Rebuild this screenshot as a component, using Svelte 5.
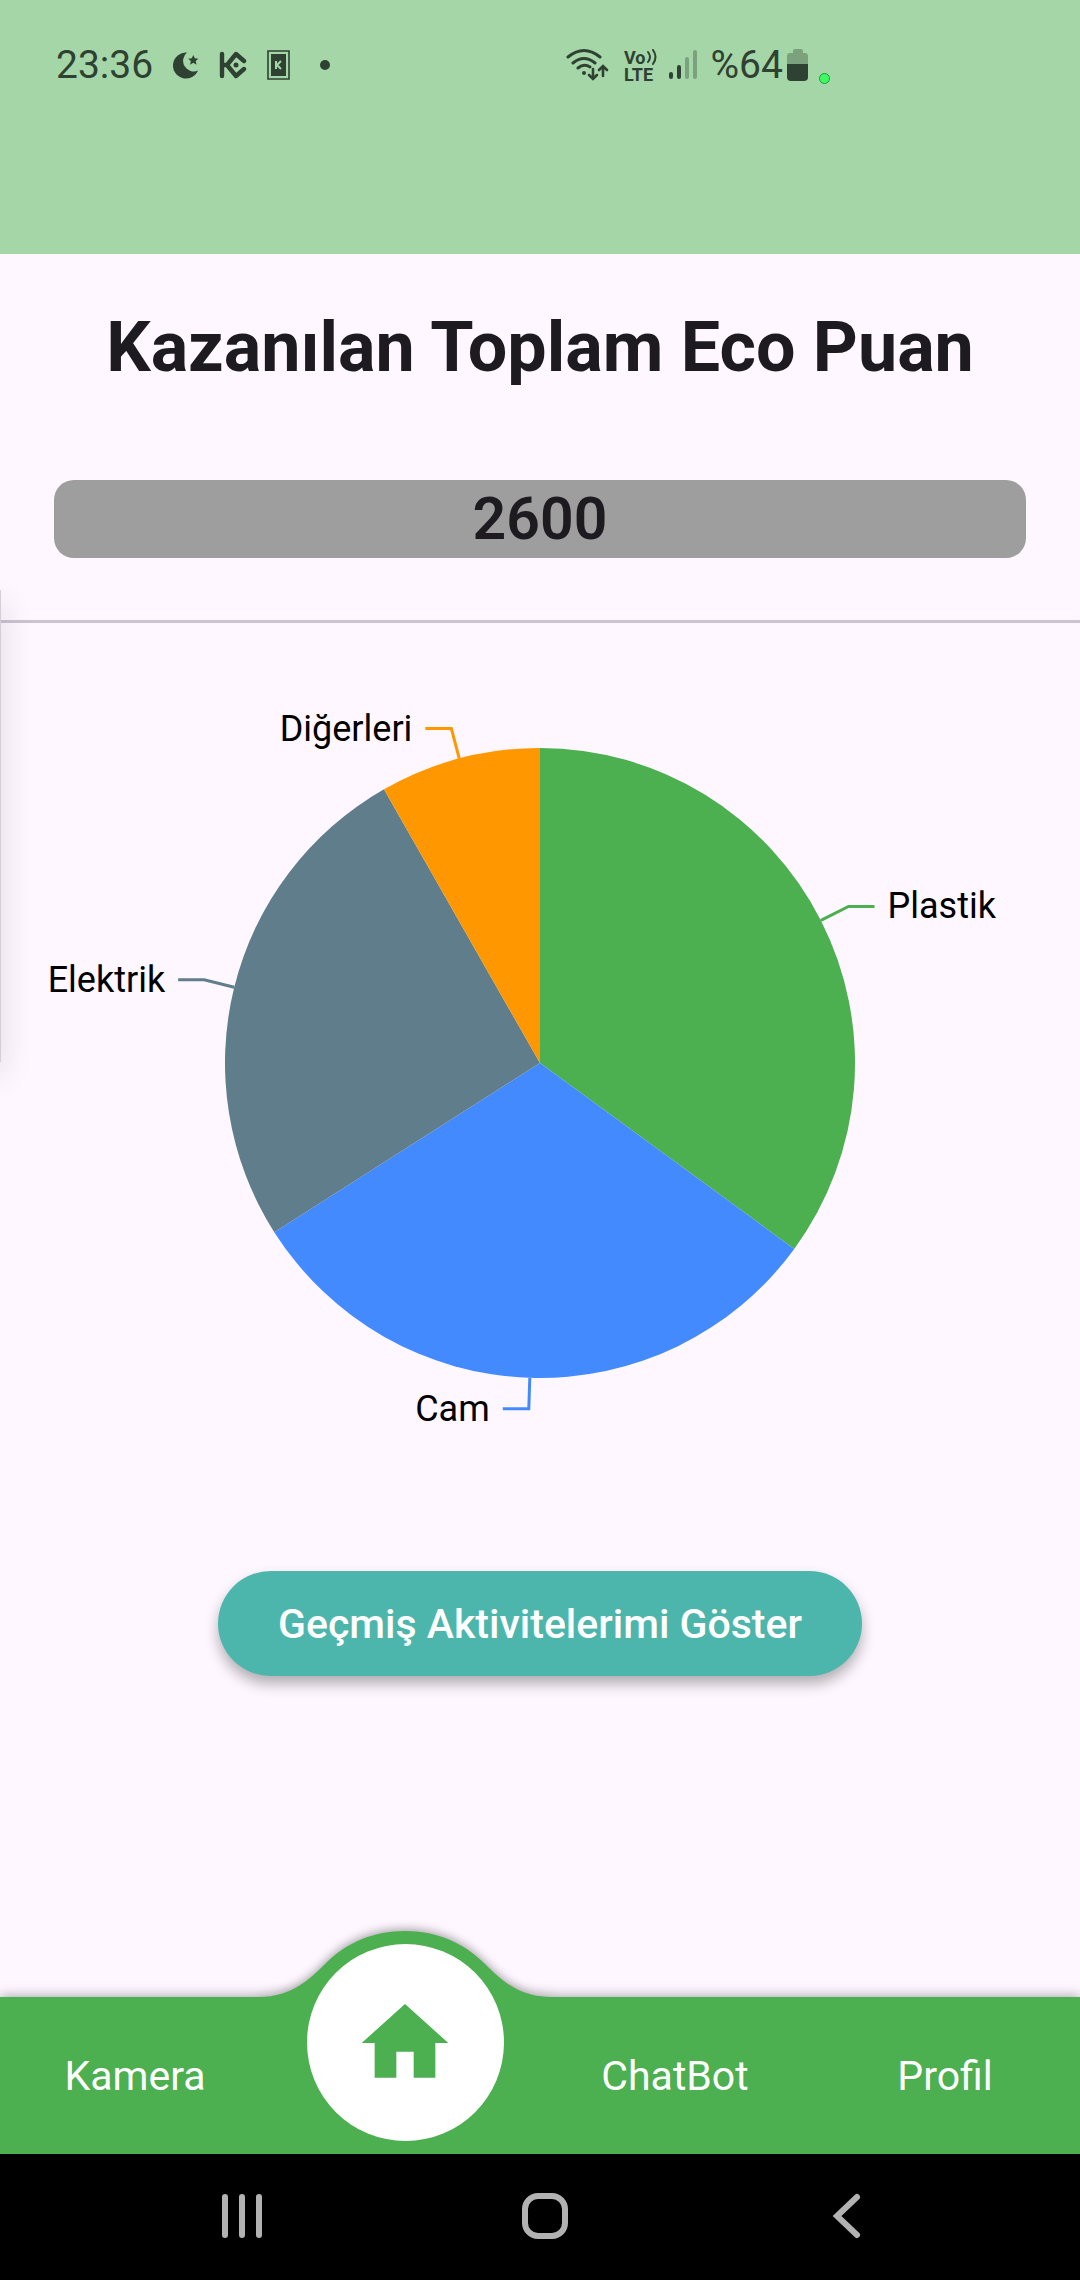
<script>
  const radius = 315;
  const cx = 540;
  const cy = 383;
  const data = [
    { name: 'Plastik', value: 34, color: '#4caf50' },
    { name: 'Cam', value: 30, color: '#448aff' },
    { name: 'Elektrik', value: 25, color: '#607d8b' },
    { name: 'Diğerleri', value: 8, color: '#ff9800' }
  ];
  const total = data.reduce((sum, d) => sum + d.value, 0);
  const at = (turn, r) => [
    cx + r * Math.sin(turn * 2 * Math.PI),
    cy - r * Math.cos(turn * 2 * Math.PI)
  ];

  let used = 0;
  const slices = data.map((d) => {
    const start = used / total;
    used += d.value;
    const end = used / total;
    const mid = (start + end) / 2;
    const side = mid < 0.5 ? 1 : -1;
    const a = at(start, radius);
    const b = at(end, radius);
    const edge = at(mid, radius);
    const elbow = at(mid, radius + 31);
    const large = end - start > 0.5 ? 1 : 0;
    return {
      ...d,
      wedge: `M${cx} ${cy}L${a}A${radius} ${radius} 0 ${large} 1 ${b}Z`,
      line: `M${edge}L${elbow}h${side * 26}`,
      x: elbow[0] + side * 39,
      y: elbow[1] + 12,
      anchor: side > 0 ? 'start' : 'end'
    };
  });
</script>

<div class="screen">
  <header>
    <div class="status left">
      <span class="clock">23:36</span>
      <svg width="26" height="27" viewBox="0 0 26 27" fill="#2f4132" aria-hidden="true">
        <path d="M14 .6A13 13 0 1 0 25 18.500A10.600 10.600 0 0 1 14 .6Z" />
        <path d="M20.300 3l1.500 3.300 3.600.4-2.700 2.400.8 3.600-3.200-1.900-3.200 1.900.8-3.600-2.700-2.400 3.600-.4z" />
      </svg>
      <svg width="28" height="30" viewBox="0 0 28 30" fill="none" stroke="#2f4132" stroke-width="4.400" stroke-linecap="round" stroke-linejoin="round" aria-hidden="true">
        <path d="M3 4v22M4 15h4L17 4l8 7M8 15l9 11 8-7" />
        <circle cx="17" cy="15" r="2.500" fill="#2f4132" stroke="none" />
      </svg>
      <svg width="23" height="30" viewBox="0 0 23 30" aria-hidden="true">
        <path d="M1 1h21v28H1z" fill="none" stroke="#2f4132" stroke-width="1.600" />
        <path d="M4 4h15v22H4z" fill="#2f4132" />
        <path d="M9 11v8M14 11l-4 4 4 4" fill="none" stroke="#a5d6a7" stroke-width="2" />
      </svg>
      <span class="dot"></span>
    </div>
    <div class="status right">
      <svg width="44" height="34" viewBox="0 0 44 34" fill="none" stroke="#2f4132" stroke-width="3" stroke-linecap="round" aria-hidden="true">
        <path d="M2 9Q18-4 34 9M7 15Q18 6 29 15M12 20Q18 15 24 19" />
        <circle cx="18" cy="25" r="2" fill="#2f4132" stroke="none" />
        <path d="M27 21v9M23 27l4 4 4-4M37 28V19M33 22l4-4 4 4" stroke-width="2.600" />
      </svg>
      <span class="volte">
        <span class="vo">Vo<svg width="10" height="16" viewBox="0 0 10 16" fill="none" stroke="#2f4132" stroke-width="2" stroke-linecap="round" aria-hidden="true">
            <path d="M1 3q4 5 0 10M6 1q5 7 0 14" />
          </svg></span>
        <span>LTE</span>
      </span>
      <svg class="signal" width="28" height="30" viewBox="0 0 28 30" stroke="#2f4132" stroke-width="4" stroke-linecap="round" aria-hidden="true">
        <path d="M2 24v3M10 17v10" />
        <path d="M18 9v18M26 2v25" opacity=".35" />
      </svg>
      <span class="percent">%64</span>
      <svg class="battery" width="22" height="34" viewBox="0 0 22 34" fill="#2f4132" aria-hidden="true">
        <path d="M0 16V8a3 3 0 0 1 3-3h3V3a2 2 0 0 1 2-2h6a2 2 0 0 1 2 2v2h2a3 3 0 0 1 3 3v8z" opacity=".35" />
        <path d="M0 16h21v13a4 4 0 0 1-4 4H4a4 4 0 0 1-4-4z" />
      </svg>
      <span class="led"></span>
    </div>
  </header>

  <main>
    <h1>Kazanılan Toplam Eco Puan</h1>
    <div class="points">2600</div>
    <hr />
    <svg class="chart" viewBox="0 0 1080 775" role="img" aria-label="Eco Puan">
      {#each slices as s (s.name)}
        <path d={s.wedge} fill={s.color} />
        <path d={s.line} fill="none" stroke={s.color} stroke-width="3" />
        <text x={s.x} y={s.y} text-anchor={s.anchor}>{s.name}</text>
      {/each}
    </svg>
    <button class="history" type="button">Geçmiş Aktivitelerimi Göster</button>
    <div class="drawer-edge"></div>
  </main>

  <nav class="tabs">
    <a href="#kamera">Kamera</a>
    <a class="home" href="#home" aria-label="Home">
      <svg class="bump" width="292" height="67" viewBox="0 0 292 67" aria-hidden="true">
        <path d="M0 67V66C32 66 50 49 66 33C88 11 115 0 146 0S204 11 226 33C242 49 260 66 292 66V67Z" fill="#4caf50" />
      </svg>
      <span class="disc">
        <svg width="104" height="104" viewBox="0 0 24 24" fill="#4caf50" aria-hidden="true">
          <path d="M10 20v-6h4v6h5v-8h3L12 3 2 12h3v8z" />
        </svg>
      </span>
    </a>
    <a href="#chatbot">ChatBot</a>
    <a href="#profil">Profil</a>
  </nav>

  <div class="system">
    <button type="button" aria-label="Recents">
      <svg width="48" height="48" viewBox="0 0 48 48" aria-hidden="true">
        <path d="M6 5v38M23 5v38M40 5v38" />
      </svg>
    </button>
    <button type="button" aria-label="Home screen">
      <svg width="48" height="48" viewBox="0 0 48 48" aria-hidden="true">
        <rect x="4" y="4" width="40" height="40" rx="13" />
      </svg>
    </button>
    <button type="button" aria-label="Back">
      <svg width="48" height="48" viewBox="0 0 48 48" aria-hidden="true">
        <path d="M34 5L14 24l20 19" />
      </svg>
    </button>
  </div>
</div>

<style>
  :global(body) {
    margin: 0;
    background: #fef7ff;
  }
  .screen {
    min-height: 100vh;
    display: flex;
    flex-direction: column;
    overflow: hidden;
    font-family: Roboto, 'Liberation Sans', sans-serif;
    color: #1d1b20;
    background: #fef7ff;
  }
  header {
    height: 254px;
    box-sizing: border-box;
    padding: 40px 56px 0;
    display: grid;
    grid-template-columns: 510px 1fr;
    align-items: start;
    background: #a5d6a7;
    color: #2f4132;
  }
  .status {
    height: 50px;
    display: flex;
    align-items: center;
  }
  .clock,
  .percent {
    font-size: 39px;
    line-height: 50px;
  }
  .left {
    gap: 20px;
  }
  .dot {
    width: 10px;
    height: 10px;
    margin-left: 10px;
    border-radius: 50%;
    background: #2f4132;
  }
  .volte {
    display: flex;
    flex-direction: column;
    margin-left: 14px;
    padding-top: 2px;
    font-size: 18px;
    line-height: 17px;
    font-weight: 700;
  }
  .vo {
    display: flex;
    gap: 1px;
  }
  .signal {
    margin: 0 14px 0 12px;
  }
  .battery {
    margin-left: 4px;
  }
  .led {
    width: 9px;
    height: 9px;
    margin: 26px 0 0 10px;
    border: 1px solid #1f9a3c;
    border-radius: 50%;
    background: #3dfc62;
  }
  main {
    position: relative;
    flex: 1;
    display: flex;
    flex-direction: column;
  }
  h1 {
    margin: 53px 0 0;
    font-size: 70px;
    line-height: 80px;
    font-weight: 700;
    text-align: center;
  }
  .points {
    margin: 93px 54px 0;
    border-radius: 20px;
    background: #9e9e9e;
    font-size: 59px;
    line-height: 78px;
    font-weight: 600;
    text-align: center;
  }
  hr {
    width: 100%;
    height: 3px;
    margin: 62px 0 0;
    border: 0;
    background: #cac4d0;
  }
  .chart {
    display: block;
    width: 100%;
    margin-top: 57px;
  }
  .chart text {
    font-size: 36px;
    fill: #000;
  }
  .history {
    align-self: center;
    height: 105px;
    margin-top: 116px;
    padding: 0 60px;
    border: 0;
    border-radius: 53px;
    background: #4db6ac;
    color: #fff;
    font: 500 41px Roboto, sans-serif;
    box-shadow: 0 8px 14px rgba(0, 0, 0, 0.3);
  }
  .drawer-edge {
    position: absolute;
    top: 336px;
    left: -19px;
    width: 20px;
    height: 472px;
    background: #d3cfd5;
    box-shadow: 0 12px 32px rgba(0, 0, 0, 0.14);
  }
  .tabs {
    display: grid;
    grid-template-columns: repeat(4, 1fr);
    height: 157px;
    background: #4caf50;
    box-shadow: 0 0 12px rgba(0, 0, 0, 0.4);
  }
  .tabs a {
    height: 157px;
    display: flex;
    align-items: center;
    justify-content: center;
    color: #fff;
    font-size: 41px;
    text-decoration: none;
  }
  .tabs .home {
    position: relative;
    align-items: flex-end;
  }
  .bump {
    position: absolute;
    bottom: 156px;
    left: 50%;
    margin-left: -146px;
    filter: drop-shadow(0 -2px 5px rgba(0, 0, 0, 0.35));
    clip-path: inset(-20px -20px 0 -20px);
  }
  .disc {
    position: relative;
    display: grid;
    place-items: center;
    width: 197px;
    height: 197px;
    margin-bottom: 13px;
    border-radius: 50%;
    background: #fff;
  }
  .system {
    height: 126px;
    box-sizing: border-box;
    padding: 0 0 3px 9px;
    display: flex;
    justify-content: center;
    gap: 254px;
    align-items: center;
    background: #000;
  }
  .system button {
    padding: 0;
    border: 0;
    background: none;
    line-height: 0;
  }
  .system svg {
    fill: none;
    stroke: #b2b2b2;
    stroke-width: 6px;
    stroke-linecap: round;
  }
</style>
